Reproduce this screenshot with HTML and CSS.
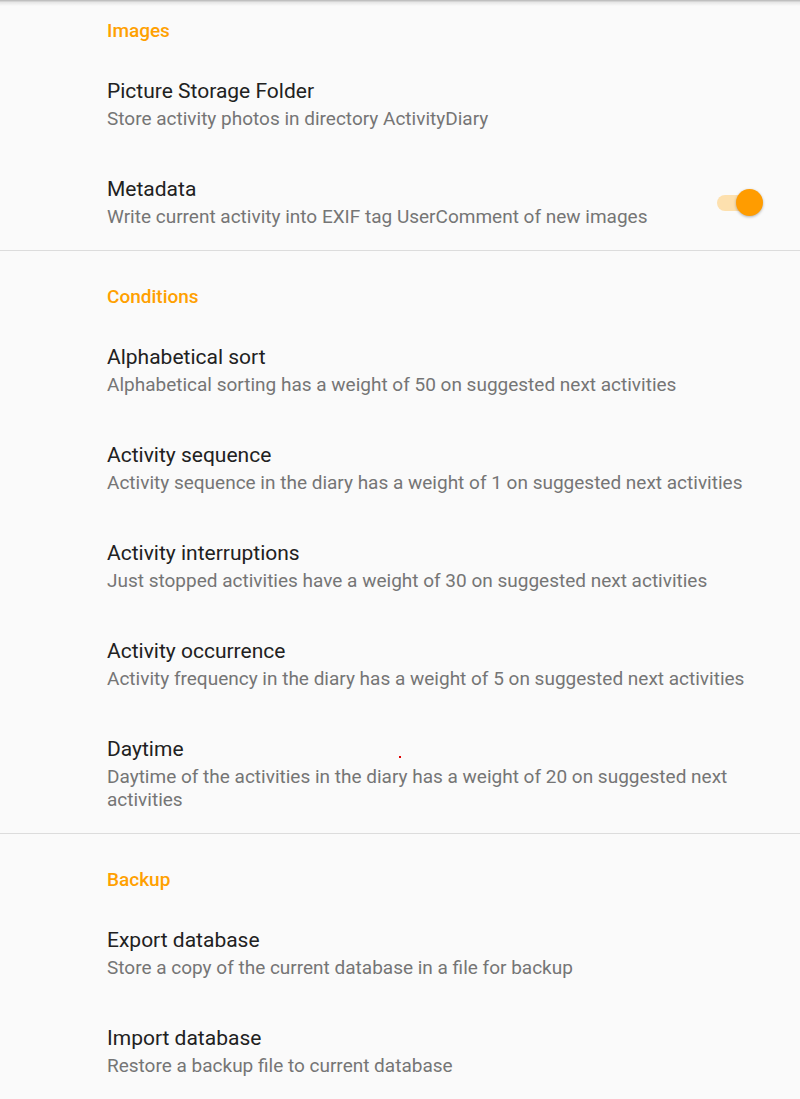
FILE: index.html
```html
<!DOCTYPE html>
<html>
<head>
<meta charset="utf-8">
<link rel="stylesheet" href="styles.css">
</head>
<body>
<div class="screen">
  <div class="toolbar-shadow"></div>

  <section class="category first">
    <div class="cat-title">Images</div>
    <div class="pref">
      <div class="pref-text">
        <div class="pref-title">Picture Storage Folder</div>
        <div class="pref-summary">Store activity photos in directory ActivityDiary</div>
      </div>
    </div>
    <div class="pref">
      <div class="pref-text">
        <div class="pref-title">Metadata</div>
        <div class="pref-summary">Write current activity into EXIF tag UserComment of new images</div>
      </div>
      <div class="switch">
        <div class="track"></div>
        <div class="thumb"></div>
      </div>
    </div>
  </section>

  <div class="divider"></div>

  <section class="category">
    <div class="cat-title">Conditions</div>
    <div class="pref">
      <div class="pref-text">
        <div class="pref-title">Alphabetical sort</div>
        <div class="pref-summary">Alphabetical sorting has a weight of 50 on suggested next activities</div>
      </div>
    </div>
    <div class="pref">
      <div class="pref-text">
        <div class="pref-title">Activity sequence</div>
        <div class="pref-summary">Activity sequence in the diary has a weight of 1 on suggested next activities</div>
      </div>
    </div>
    <div class="pref">
      <div class="pref-text">
        <div class="pref-title">Activity interruptions</div>
        <div class="pref-summary">Just stopped activities have a weight of 30 on suggested next activities</div>
      </div>
    </div>
    <div class="pref">
      <div class="pref-text">
        <div class="pref-title">Activity occurrence</div>
        <div class="pref-summary">Activity frequency in the diary has a weight of 5 on suggested next activities</div>
      </div>
    </div>
    <div class="pref daytime">
      <div class="pref-text">
        <div class="pref-title">Daytime</div>
        <div class="pref-summary">Daytime of the activities in the diary has a weight of 20 on suggested next activities</div>
      </div>
      <span class="red-dot"></span>
    </div>
  </section>

  <div class="divider"></div>

  <section class="category">
    <div class="cat-title">Backup</div>
    <div class="pref">
      <div class="pref-text">
        <div class="pref-title">Export database</div>
        <div class="pref-summary">Store a copy of the current database in a file for backup</div>
      </div>
    </div>
    <div class="pref">
      <div class="pref-text">
        <div class="pref-title">Import database</div>
        <div class="pref-summary">Restore a backup file to current database</div>
      </div>
    </div>
  </section>
</div>
</body>
</html>
```

FILE: styles.css
```css
html, body {
  margin: 0;
  padding: 0;
  background: #fafafa;
}

body {
  font-family: Roboto, "Noto Sans", "Liberation Sans", sans-serif;
  width: 800px;
  height: 1099px;
  overflow: hidden;
}

.screen {
  position: relative;
  width: 800px;
  min-height: 1099px;
  background: #fafafa;
}

.toolbar-shadow {
  position: absolute;
  left: 0;
  top: 0;
  width: 100%;
  height: 6px;
  background: linear-gradient(to bottom, rgba(0,0,0,0.28), rgba(0,0,0,0.08) 40%, rgba(0,0,0,0));
  pointer-events: none;
}

.category {
  display: flex;
  flex-direction: column;
}

.cat-title {
  padding: 36px 37px 14px 107px;
  font-size: 19px;
  line-height: 20px;
  font-weight: 500;
  color: #ffa000;
}

.category.first .cat-title {
  padding-top: 21px;
  padding-bottom: 14px;
}

.pref {
  position: relative;
  display: flex;
  align-items: center;
  padding: 22px 37px 23px 107px;
  gap: 16px;
}

.pref-text {
  flex: 1;
  min-width: 0;
}

.pref-title {
  font-size: 21px;
  line-height: 28px;
  color: #212121;
}

.pref-summary {
  margin-top: 2px;
  font-size: 19px;
  line-height: 23px;
  color: #757575;
}

.divider {
  height: 1px;
  background: #dcdcdc;
  margin-top: -1px;
}

.switch {
  position: relative;
  width: 46px;
  height: 28px;
  flex: none;
  margin-top: 2px;
}

.track {
  position: absolute;
  left: 0;
  top: 6px;
  width: 42px;
  height: 16px;
  border-radius: 8px;
  background: #fde0ae;
}

.thumb {
  position: absolute;
  right: 0;
  top: 0;
  width: 27px;
  height: 27px;
  border-radius: 50%;
  background: #ff9c00;
  box-shadow: 0 1px 3px rgba(0,0,0,0.3);
}

.red-dot {
  position: absolute;
  left: 399px;
  top: 43px;
  width: 2px;
  height: 2px;
  background: #e00000;
}
```
